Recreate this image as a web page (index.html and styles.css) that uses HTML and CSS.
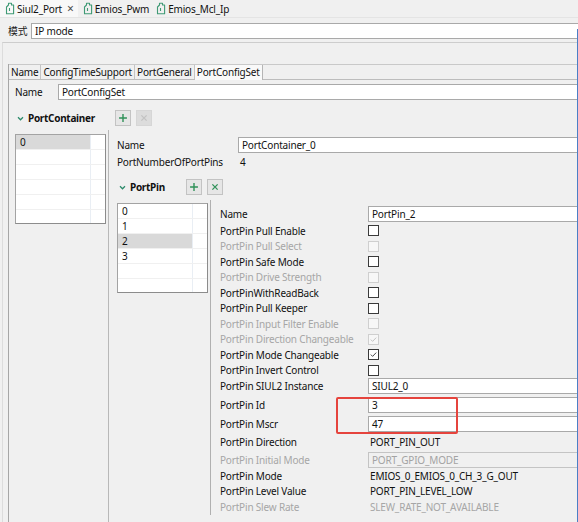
FILE: index.html
```html
<!DOCTYPE html>
<html lang="zh">
<head>
<meta charset="utf-8">
<title>Siul2_Port</title>
<link rel="stylesheet" href="styles.css">
</head>
<body>
<div class="window">
  <div class="editor-tabs">
    <div class="etab active">
      <svg class="ficon" viewBox="0 0 11 13"><path d="M1.5 5 L3.5 3 L3.5 1.2 L6.5 1.2 L6.5 3 L8.6 3 L8.6 11.8 L1.5 11.8 Z M4.5 6 L4.5 9" /></svg>
      <span>Siul2_Port</span><span class="close">×</span>
    </div>
    <div class="etab">
      <svg class="ficon" viewBox="0 0 11 13"><path d="M1.5 5 L3.5 3 L3.5 1.2 L6.5 1.2 L6.5 3 L8.6 3 L8.6 11.8 L1.5 11.8 Z M4.5 6 L4.5 9" /></svg>
      <span>Emios_Pwm</span>
    </div>
    <div class="etab">
      <svg class="ficon" viewBox="0 0 11 13"><path d="M1.5 5 L3.5 3 L3.5 1.2 L6.5 1.2 L6.5 3 L8.6 3 L8.6 11.8 L1.5 11.8 Z M4.5 6 L4.5 9" /></svg>
      <span>Emios_Mcl_Ip</span>
    </div>
  </div>

  <div class="mode-row">
    <span class="mode-label">模式</span>
    <div class="field mode-field">IP mode</div>
  </div>

  <div class="section">
    <div class="inner">
      <div class="ptabs">
        <div class="ptab">Name</div>
        <div class="ptab">ConfigTimeSupport</div>
        <div class="ptab">PortGeneral</div>
        <div class="ptab active">PortConfigSet</div>
      </div>

      <div class="panel">
        <div class="name-row">
          <span class="name-label">Name</span>
          <div class="field grow">PortConfigSet</div>
        </div>

        <div class="group-head head-container">
          <svg class="chev" viewBox="0 0 8 6"><polyline points="1,1.5 4,4.5 7,1.5" /></svg>
          <span class="group-title title-container">PortContainer</span>
          <span class="btn"><svg viewBox="0 0 16 16"><path class="plus" d="M8 3.5 V12.5 M3.5 8 H12.5" /></svg></span>
          <span class="btn disabled"><svg viewBox="0 0 16 16"><path class="cross off" d="M5 5 L11 11 M11 5 L5 11" /></svg></span>
        </div>

        <div class="split">
          <div class="list-col">
            <div class="list">
              <div class="li sel"><span class="cell">0</span><span class="cell2"></span></div>
              <div class="li"><span class="cell"></span><span class="cell2"></span></div>
              <div class="li"><span class="cell"></span><span class="cell2"></span></div>
              <div class="li"><span class="cell"></span><span class="cell2"></span></div>
              <div class="li"><span class="cell"></span><span class="cell2"></span></div>
              <div class="li last"><span class="cell"></span><span class="cell2"></span></div>
            </div>
          </div>

          <div class="container-detail">
            <div class="cd-row cd-name">
              <span class="cd-label">Name</span>
              <div class="field grow">PortContainer_0</div>
            </div>
            <div class="cd-row cd-count">
              <span class="cd-label">PortNumberOfPortPins</span>
              <span class="cd-value">4</span>
            </div>

            <div class="group-head head-pin">
              <svg class="chev" viewBox="0 0 8 6"><polyline points="1,1.5 4,4.5 7,1.5" /></svg>
              <span class="group-title title-pin">PortPin</span>
              <span class="btn"><svg viewBox="0 0 16 16"><path class="plus" d="M8 3.5 V12.5 M3.5 8 H12.5" /></svg></span>
              <span class="btn"><svg viewBox="0 0 16 16"><path class="cross" d="M5 5 L11 11 M11 5 L5 11" /></svg></span>
            </div>

            <div class="split2">
              <div class="pin-col">
                <div class="list pin-list">
                  <div class="li"><span class="cell">0</span><span class="cell2"></span></div>
                  <div class="li"><span class="cell">1</span><span class="cell2"></span></div>
                  <div class="li sel"><span class="cell">2</span><span class="cell2"></span></div>
                  <div class="li"><span class="cell">3</span><span class="cell2"></span></div>
                  <div class="li"><span class="cell"></span><span class="cell2"></span></div>
                  <div class="li last"><span class="cell"></span><span class="cell2"></span></div>
                </div>
              </div>

              <div class="pin-detail">
                <div class="pd-row pd-input"><span class="pd-label">Name</span><div class="field grow">PortPin_2</div></div>
                <div class="checks">
                  <div class="pd-row pd-check"><span class="pd-label">PortPin Pull Enable</span><span class="cb"></span></div>
                  <div class="pd-row pd-check dis"><span class="pd-label">PortPin Pull Select</span><span class="cb"></span></div>
                  <div class="pd-row pd-check"><span class="pd-label">PortPin Safe Mode</span><span class="cb"></span></div>
                  <div class="pd-row pd-check dis"><span class="pd-label">PortPin Drive Strength</span><span class="cb"></span></div>
                  <div class="pd-row pd-check"><span class="pd-label">PortPinWithReadBack</span><span class="cb"></span></div>
                  <div class="pd-row pd-check"><span class="pd-label">PortPin Pull Keeper</span><span class="cb"></span></div>
                  <div class="pd-row pd-check dis"><span class="pd-label">PortPin Input Filter Enable</span><span class="cb"></span></div>
                  <div class="pd-row pd-check dis"><span class="pd-label">PortPin Direction Changeable</span><span class="cb"><svg viewBox="0 0 11 11"><polyline points="2.2,5.6 4.4,7.8 8.8,3.2" /></svg></span></div>
                  <div class="pd-row pd-check"><span class="pd-label">PortPin Mode Changeable</span><span class="cb"><svg viewBox="0 0 11 11"><polyline points="2.2,5.6 4.4,7.8 8.8,3.2" /></svg></span></div>
                  <div class="pd-row pd-check"><span class="pd-label">PortPin Invert Control</span><span class="cb"></span></div>
                </div>
                <div class="inputs">
                  <div class="pd-row pd-input"><span class="pd-label">PortPin SIUL2 Instance</span><div class="field grow">SIUL2_0</div></div>
                  <div class="pd-row pd-input"><span class="pd-label">PortPin Id</span><div class="field grow">3</div></div>
                  <div class="pd-row pd-input"><span class="pd-label">PortPin Mscr</span><div class="field grow">47</div></div>
                </div>
                <div class="pd-row pd-text pd-dir"><span class="pd-label">PortPin Direction</span><span class="pd-value">PORT_PIN_OUT</span></div>
                <div class="pd-row pd-input dis pd-init"><span class="pd-label">PortPin Initial Mode</span><div class="field grow off">PORT_GPIO_MODE</div></div>
                <div class="pd-row pd-text"><span class="pd-label">PortPin Mode</span><span class="pd-value">EMIOS_0_EMIOS_0_CH_3_G_OUT</span></div>
                <div class="pd-row pd-text"><span class="pd-label">PortPin Level Value</span><span class="pd-value">PORT_PIN_LEVEL_LOW</span></div>
                <div class="pd-row pd-text dis"><span class="pd-label">PortPin Slew Rate</span><span class="pd-value">SLEW_RATE_NOT_AVAILABLE</span></div>
              </div>
            </div>
          </div>
        </div>
      </div>
    </div>
  </div>

  <div class="highlight"></div>
  <div class="edge"></div>
</div>
</body>
</html>
```

FILE: styles.css
```css
* { box-sizing: border-box; }
html, body { margin: 0; padding: 0; }
body {
  width: 578px;
  height: 522px;
  overflow: hidden;
  background: #f0f0f0;
  font-family: "Noto Sans", "Noto Sans CJK SC", sans-serif;
  font-size: 10px;
  letter-spacing: -0.18px;
  line-height: 14px;
  color: #111;
}
.window { position: relative; width: 578px; height: 522px; overflow: hidden; }

/* editor tabs */
.editor-tabs { display: flex; height: 18px; border-bottom: 1px solid #e4e4e4; }
.etab { display: flex; align-items: center; height: 17px; padding: 0 2px 0 5px; font-size: 10px; }
.etab.active { background: #f8f8f8; padding-right: 4px; }
.ficon { width: 11px; height: 13px; margin-right: 1px; }
.ficon path { fill: none; stroke: #3f9a75; stroke-width: 1.1; stroke-linejoin: round; }
.close { margin-left: 5px; color: #4a4a4a; font-size: 12px; }

/* mode row */
.mode-row { display: flex; align-items: center; height: 24px; padding-top: 5px; padding-bottom: 3px; }
.mode-label { width: 31px; padding-left: 8px; color: #1a1a1a; font-family: "Noto Sans CJK SC", sans-serif; font-size: 9.8px; letter-spacing: 0; }
.field {
  height: 16px;
  border: 1px solid #a9a9a9;
  border-right: none;
  background: #fff;
  padding-left: 3px;
  line-height: 14px;
  white-space: nowrap;
}
.mode-field { flex: 1; }
.grow { flex: 1; }
.field.off { background: #f0f0f0; border-color: #c4c4c4; color: #a3a3a3; }

/* section */
.section { margin-left: 2px; border-top: 1px solid #cdcdcd; border-left: 1px solid #dcdcdc; height: 480px; padding-top: 21px; }
.inner { margin-left: 5px; border-left: 1px solid #a6a6a6; height: 459px; }
.ptabs { display: flex; height: 16px; border-top: 1px solid #c9c9c9; border-bottom: 1px solid #bdbdbd; }
.ptab { height: 14px; padding: 0 2px; border-right: 1px solid #c4c4c4; line-height: 14px; white-space: nowrap; }
.ptab.active { background: #f9f9f9; height: 15px; border-right: 1px solid #b5b5b5; }

.panel { height: 443px; }
.name-row { display: flex; padding-top: 4px; padding-left: 6px; height: 20px; }
.name-label { width: 43px; line-height: 16px; }

.group-head { display: flex; align-items: center; height: 16px; }
.head-container { margin-top: 10px; padding-left: 8px; }
.chev { width: 7px; height: 5px; margin-right: 4px; }
.chev polyline { fill: none; stroke: #2b8a6a; stroke-width: 1.5; }
.group-title { font-weight: bold; letter-spacing: -0.3px; }
.title-container { width: 87px; }
.btn { width: 16px; height: 16px; background: #e6e6e6; border: 1px solid #c3c3c3; margin-right: 5px; display: flex; }
.btn svg { width: 14px; height: 14px; }
.btn.disabled { background: #dcdcdc; border-color: #d6d6d6; }
.plus { stroke: #2f9158; stroke-width: 1.6; fill: none; }
.cross { stroke: #2f9158; stroke-width: 1.5; fill: none; }
.cross.off { stroke: #c2c2c2; }

.split { display: flex; margin-top: 4px; height: 397px; }
.list-col { width: 100px; flex: none; border-right: 1px solid #b8b8b8; padding-left: 6px; padding-top: 4px; }
.list { width: 91px; height: 90px; background: #fff; border: 1px solid #a3a3a3; border-right-color: #8c8c8c; border-bottom-color: #8c8c8c; overflow: hidden; }
.li { display: flex; height: 15px; border-bottom: 1px solid #f0f0f0; }
.li .cell { width: 75px; padding-left: 4px; line-height: 14px; border-right: 1px solid #e9eef4; }
.li .cell2 { flex: 1; }
.li.sel .cell { background: #d9d9d9; }

.container-detail { flex: 1; padding-left: 8px; }
.cd-row { display: flex; }
.cd-label { width: 121px; flex: none; line-height: 16px; }
.cd-name { margin-top: 7px; height: 16px; }
.cd-count { margin-top: 2px; height: 15px; }
.cd-count .cd-label { line-height: 15px; }
.cd-value { padding-left: 2px; line-height: 15px; }
.head-pin { margin-top: 9px; padding-left: 2px; }
.title-pin { width: 56px; }

.split2 { display: flex; margin-top: 5px; height: 315px; }
.pin-col { width: 94px; flex: none; border-right: 1px solid #b0b0b0; padding-top: 3px; }
.pin-detail { flex: 1; padding-left: 9px; padding-top: 6px; }
.pd-row { display: flex; align-items: center; }
.pd-label { width: 148px; flex: none; white-space: nowrap; }
.pd-input { height: 16px; }
.checks { margin-top: 1px; }
.pd-check { height: 15.5px; }
.inputs { display: flex; flex-direction: column; gap: 3px; }
.pd-text { height: 15.5px; }
.pd-value { padding-left: 2px; white-space: nowrap; }
.pd-dir { margin-top: 2px; height: 16px; }
.pd-init { margin-top: 2px; }
.dis { color: #a6a6a6; }

.cb { width: 11px; height: 11px; border: 1px solid #3a3a3a; background: #fff; display: block; }
.cb svg { width: 9px; height: 9px; display: block; }
.cb polyline { fill: none; stroke: #333; stroke-width: 1.1; }
.dis .cb { border-color: #cfcfcf; background: #f7f7f7; }
.dis .cb polyline { stroke: #bdbdbd; }

.highlight { position: absolute; left: 336px; top: 397px; width: 122px; height: 37px; border: 2px solid #e5443d; border-radius: 2px; }
.edge { position: absolute; right: 0; top: 29px; bottom: 0; width: 1px; background: #4b7fc6; }
```
